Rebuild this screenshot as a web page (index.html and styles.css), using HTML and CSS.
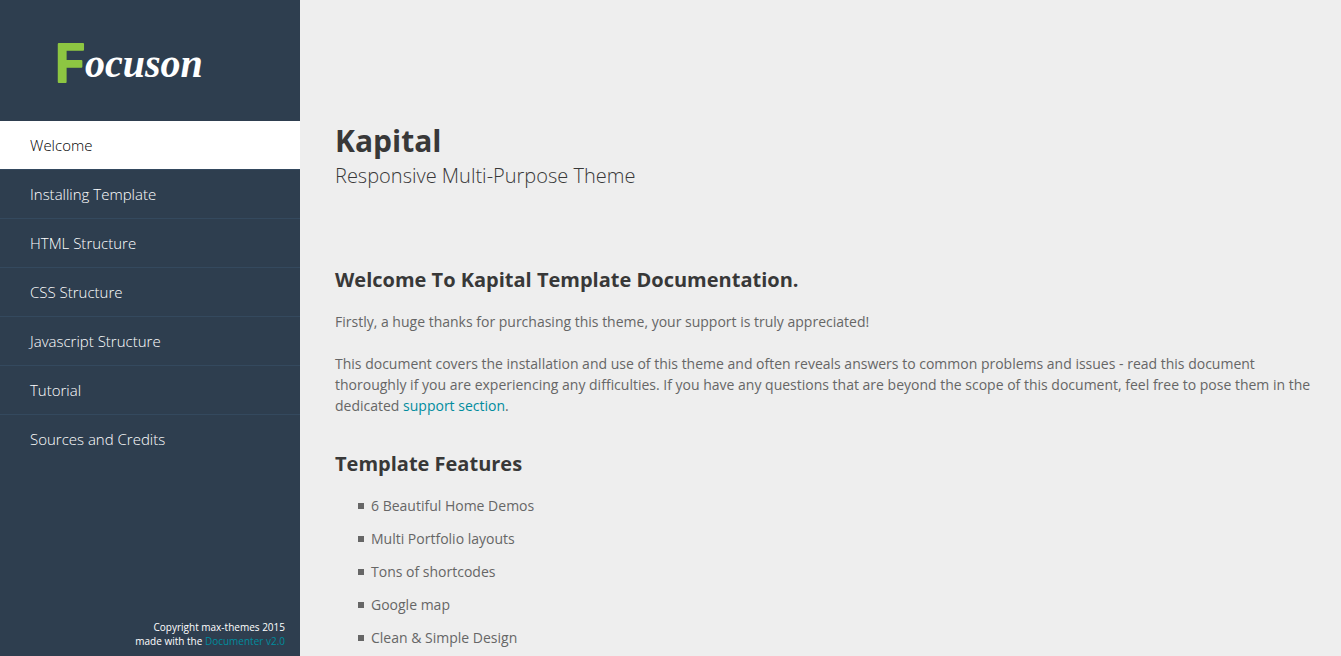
FILE: index.html
```
<!DOCTYPE html>
<html lang="en">
<head>
<meta charset="utf-8">
<meta name="viewport" content="width=device-width, initial-scale=1">
<title>Kapital Documentation</title>
<link rel="stylesheet" href="styles.css">
</head>
<body>
<div class="layout">
  <aside class="sidebar">
    <a class="logo" href="#welcome" aria-label="Focuson">
      <svg class="logo-art" width="170" height="80" viewBox="0 0 170 80" aria-hidden="true">
        <text class="logo-initial" x="5" y="62">F</text>
        <text class="logo-rest" x="35" y="57">ocuson</text>
      </svg>
    </a>
    <nav class="nav">
      <a class="nav-link nav-link-current" href="#welcome" aria-current="page">Welcome</a>
      <a class="nav-link" href="#installing">Installing Template</a>
      <a class="nav-link" href="#html">HTML Structure</a>
      <a class="nav-link" href="#css">CSS Structure</a>
      <a class="nav-link" href="#javascript">Javascript Structure</a>
      <a class="nav-link" href="#tutorial">Tutorial</a>
      <a class="nav-link" href="#credits">Sources and Credits</a>
    </nav>
    <footer class="copyright">Copyright max-themes 2015<br>made with the <a class="link" href="#documenter">Documenter v2.0</a></footer>
  </aside>
  <main class="content" id="welcome">
    <header class="intro">
      <h1 class="title">Kapital</h1>
      <p class="subtitle">Responsive Multi-Purpose Theme</p>
    </header>
    <h2 class="heading">Welcome To Kapital Template Documentation.</h2>
    <p class="text">Firstly, a huge thanks for purchasing this theme, your support is truly appreciated!</p>
    <p class="text">This document covers the installation and use of this theme and often reveals answers to common problems and issues - read this document thoroughly if you are experiencing any difficulties. If you have any questions that are beyond the scope of this document, feel free to pose them in the dedicated <a class="link" href="#support">support section</a>.</p>
    <h2 class="heading">Template Features</h2>
    <ul class="features">
      <li class="feature">6 Beautiful Home Demos</li>
      <li class="feature">Multi Portfolio layouts</li>
      <li class="feature">Tons of shortcodes</li>
      <li class="feature">Google map</li>
      <li class="feature">Clean &amp; Simple Design</li>
    </ul>
  </main>
</div>
</body>
</html>
```
FILE: styles.css
```
* {
  box-sizing: border-box;
}

body {
  margin: 0;
  background: #eeeeee;
  color: #666666;
  font: 14px/21px "Open Sans", sans-serif;
}

.layout {
  display: grid;
  grid-template-columns: 300px minmax(0, 1fr);
  align-items: start;
}

.sidebar {
  position: sticky;
  top: 0;
  display: flex;
  flex-direction: column;
  height: 100vh;
  background: #2e3e4f;
  color: #ffffff;
}

.logo {
  padding: 20px 50px 21px;
}

.logo-art {
  display: block;
}

.logo-initial {
  fill: #8dc642;
  stroke: #8dc642;
  stroke-width: 2px;
  stroke-linejoin: round;
  font-family: Inter, sans-serif;
  font-size: 52px;
  font-weight: 600;
}

.logo-rest {
  fill: #ffffff;
  font-family: "Liberation Serif", serif;
  font-size: 40px;
  font-style: italic;
  font-weight: 700;
}

.nav {
  display: flex;
  flex-direction: column;
}

.nav-link {
  padding: 14px 30px 13px;
  border-bottom: 1px solid #34495e;
  color: #ffffff;
  font-size: 15px;
  font-weight: 300;
  text-decoration: none;
}

.nav-link:last-child {
  border-bottom: 0;
}

.nav-link-current {
  background: #ffffff;
  background-clip: padding-box;
  color: #000000;
}

.copyright {
  margin-top: auto;
  padding: 0 15px 8px;
  font-size: 10px;
  line-height: 14px;
  text-align: right;
}

.link {
  color: #008c9e;
  text-decoration: none;
}

.content {
  padding: 120px 30px 0 35px;
}

.intro {
  margin-bottom: 76px;
  color: #383838;
}

.title {
  margin: 0;
  font-size: 30px;
  font-weight: 700;
  line-height: 42px;
}

.subtitle {
  margin: 0;
  font-size: 20px;
  font-weight: 300;
  line-height: 28px;
}

.heading {
  margin: 0 0 17px;
  color: #383838;
  font-size: 20px;
  font-weight: 700;
  line-height: 28px;
}

.text {
  margin: 0 0 21px;
}

.text + .heading {
  margin-top: 34px;
}

.features {
  display: grid;
  gap: 12px;
  margin: 0;
  padding: 0 0 7px 23px;
  list-style: none;
}

.feature {
  display: flex;
  align-items: center;
  gap: 7px;
}

.feature::before {
  width: 6px;
  height: 6px;
  background: #666666;
  content: "";
}
```
